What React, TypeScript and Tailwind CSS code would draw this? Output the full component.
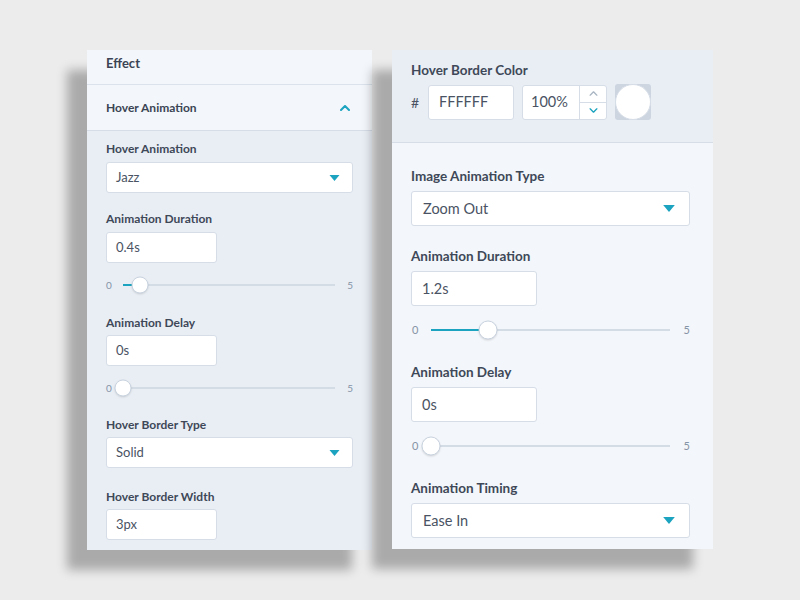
import React from 'react';

const font = { fontFamily: 'Lato, "Noto Sans", sans-serif' };

const Caret: React.FC<{ className?: string }> = ({ className }) => (
  <svg viewBox="0 0 10 6" className={className}>
    <path d="M0 0 L10 0 L5 6 Z" fill="#1ba3bf" />
  </svg>
);

const Chevron: React.FC<{ up?: boolean; color: string; className?: string; stroke?: number }> = ({
  up,
  color,
  className,
  stroke = 1.6,
}) => (
  <svg viewBox="0 0 10 6" className={className} fill="none">
    <path
      d={up ? 'M1 5 L5 1 L9 5' : 'M1 1 L5 5 L9 1'}
      stroke={color}
      strokeWidth={stroke}
      strokeLinecap="round"
      strokeLinejoin="round"
    />
  </svg>
);

type SliderProps = { pct: number; big?: boolean };

const Slider: React.FC<SliderProps> = ({ pct, big }) => (
  <div className={`flex items-center ${big ? 'h-[20px]' : 'h-[18px]'}`}>
    <span className={`text-[#8593a6] text-left ${big ? 'w-[20px] pl-[1px] text-[11px]' : 'w-[17px] text-[10px]'}`}>0</span>
    <div className="relative flex-1 h-[2px] bg-[#d3dbe5]">
      <div className="absolute left-0 top-0 h-[2px] bg-[#1ba3bf]" style={{ width: `${pct}%` }} />
      <div
        className={`absolute top-1/2 -translate-y-1/2 -translate-x-1/2 rounded-full bg-white border border-[#c9d3df] shadow-[0_1px_2px_rgba(0,0,0,0.12)] ${
          big ? 'w-[19px] h-[19px]' : 'w-[17px] h-[17px]'
        }`}
        style={{ left: `${pct}%` }}
      />
    </div>
    <span className={`text-[#8593a6] text-right ${big ? 'w-[20px] text-[11px]' : 'w-[18px] text-[10px]'}`}>5</span>
  </div>
);

const Label: React.FC<{ children: React.ReactNode; big?: boolean }> = ({ children, big }) => (
  <div className={`font-bold text-[#3e4858] ${big ? 'text-[13.5px] leading-[18px]' : 'text-[12px] leading-[16px]'}`}>
    {children}
  </div>
);

const Select: React.FC<{ value: string; big?: boolean }> = ({ value, big }) => (
  <div
    className={`flex items-center justify-between bg-white border border-[#d6dde7] rounded-[3px] ${
      big ? 'h-[35px] pl-[11px] pr-[14px] text-[14.5px]' : 'h-[31px] pl-[9px] pr-[12px] text-[13px]'
    } text-[#4a5363]`}
  >
    <span>{value}</span>
    <Caret className={big ? 'w-[12px] h-[7px]' : 'w-[11px] h-[6px]'} />
  </div>
);

const Input: React.FC<{ value: string; big?: boolean }> = ({ value, big }) => (
  <div
    className={`flex items-center bg-white border border-[#d6dde7] rounded-[3px] text-[#4a5363] ${
      big ? 'w-[126px] h-[35px] pl-[10px] text-[14.5px]' : 'w-[111px] h-[31px] pl-[9px] text-[13px]'
    }`}
  >
    {value}
  </div>
);

const LeftPanel: React.FC = () => (
  <div className="w-[285px] h-[500px] bg-[#e9eef5] flex flex-col shadow-[-20px_20px_10px_rgba(0,0,0,0.28)]">
    <div className="h-[35px] bg-[#f3f6fa] border-b border-[#dbe2eb] px-[19px] pt-[5px]">
      <div className="font-bold text-[13px] leading-[16px] text-[#3a4454]">Effect</div>
    </div>
    <div className="h-[46px] bg-[#f3f6fa] border-b border-[#d6dde7] px-[19px] flex items-center justify-between">
      <span className="font-bold text-[12px] text-[#3a4454]">Hover Animation</span>
      <Chevron up color="#1ba3bf" stroke={2} className="w-[10px] h-[6px] mr-[3px]" />
    </div>
    <div className="px-[19px] pt-[10px] flex flex-col">
      <Label>Hover Animation</Label>
      <div className="mt-[5px]">
        <Select value="Jazz" />
      </div>
      <div className="mt-[18px]">
        <Label>Animation Duration</Label>
      </div>
      <div className="mt-[5px]">
        <Input value="0.4s" />
      </div>
      <div className="mt-[13px]">
        <Slider pct={8} />
      </div>
      <div className="mt-[21px]">
        <Label>Animation Delay</Label>
      </div>
      <div className="mt-[4px]">
        <Input value="0s" />
      </div>
      <div className="mt-[13px]">
        <Slider pct={0} />
      </div>
      <div className="mt-[20px]">
        <Label>Hover Border Type</Label>
      </div>
      <div className="mt-[4px]">
        <Select value="Solid" />
      </div>
      <div className="mt-[21px]">
        <Label>Hover Border Width</Label>
      </div>
      <div className="mt-[4px]">
        <Input value="3px" />
      </div>
    </div>
  </div>
);

const RightPanel: React.FC = () => (
  <div className="w-[321px] h-[499px] bg-[#f3f6fa] flex flex-col shadow-[-20px_20px_10px_rgba(0,0,0,0.28)]">
    <div className="h-[93px] bg-[#e9eef5] border-b border-[#d6dde7] px-[19px] pt-[11px]">
      <Label big>Hover Border Color</Label>
      <div className="mt-[5px] flex items-center">
        <span className="w-[17px] text-[14px] text-[#4a5363]">#</span>
        <div className="w-[86px] h-[35px] bg-white border border-[#d6dde7] rounded-[3px] flex items-center pl-[10px] text-[14.5px] text-[#4a5363]">
          FFFFFF
        </div>
        <div className="ml-[8px] w-[85px] h-[35px] bg-white border border-[#d6dde7] rounded-[3px] flex">
          <div className="flex-1 flex items-center pl-[8px] text-[14.5px] text-[#4a5363]">100%</div>
          <div className="w-[27px] border-l border-[#d6dde7] flex flex-col">
            <div className="flex-1 flex items-center justify-center border-b border-[#d6dde7]">
              <Chevron up color="#aab6c4" className="w-[9px] h-[5px]" />
            </div>
            <div className="flex-1 flex items-center justify-center">
              <Chevron color="#1ba3bf" className="w-[9px] h-[5px]" />
            </div>
          </div>
        </div>
        <div className="ml-[8px] w-[36px] h-[36px] rounded-[3px] bg-[#ccd5e0] relative">
          <div className="absolute inset-0 rounded-full bg-white border border-[#d6dde7]" />
        </div>
      </div>
    </div>
    <div className="pl-[19px] pr-[23px] pt-[24px] flex flex-col">
      <Label big>Image Animation Type</Label>
      <div className="mt-[6px]">
        <Select big value="Zoom Out" />
      </div>
      <div className="mt-[21px]">
        <Label big>Animation Duration</Label>
      </div>
      <div className="mt-[6px]">
        <Input big value="1.2s" />
      </div>
      <div className="mt-[14px]">
        <Slider big pct={24} />
      </div>
      <div className="mt-[23px]">
        <Label big>Animation Delay</Label>
      </div>
      <div className="mt-[6px]">
        <Input big value="0s" />
      </div>
      <div className="mt-[14px]">
        <Slider big pct={0} />
      </div>
      <div className="mt-[23px]">
        <Label big>Animation Timing</Label>
      </div>
      <div className="mt-[6px]">
        <Select big value="Ease In" />
      </div>
    </div>
  </div>
);

export default function App() {
  return (
    <div className="w-[800px] h-[600px] bg-[#ececec] overflow-hidden" style={font}>
      <div className="flex items-start gap-[20px] pl-[87px] pt-[50px]">
        <LeftPanel />
        <RightPanel />
      </div>
    </div>
  );
}
